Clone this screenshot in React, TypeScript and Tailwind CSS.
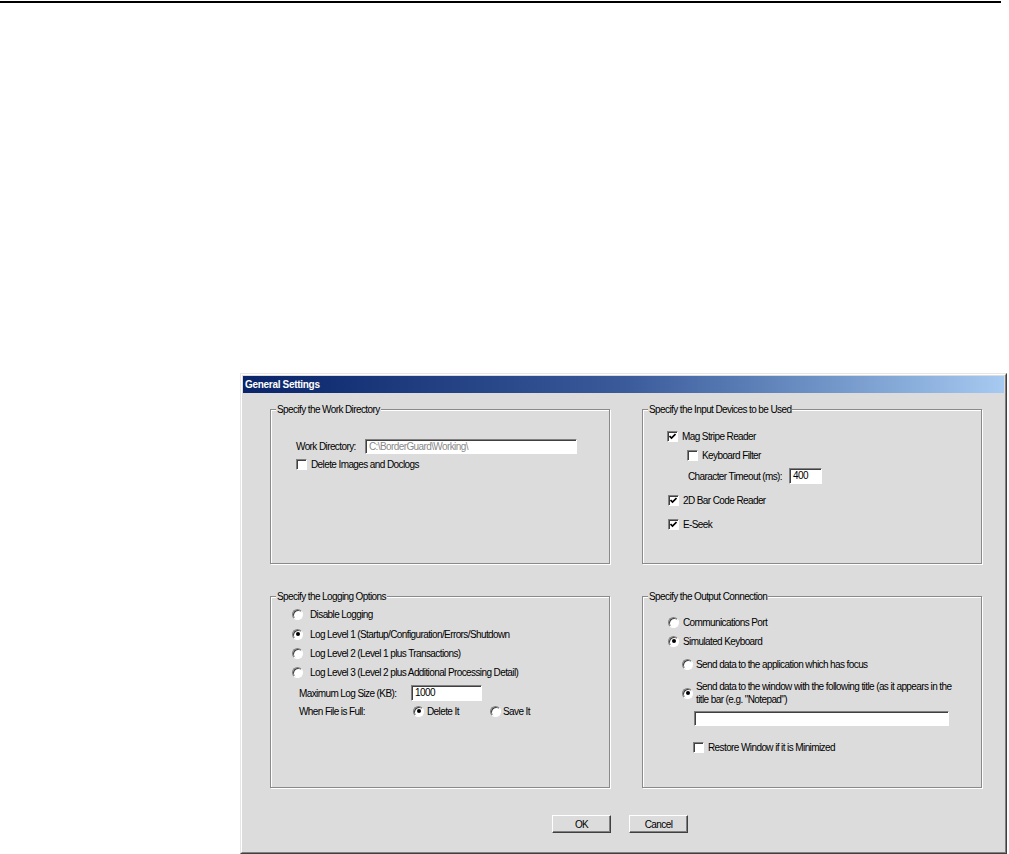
import type { ReactNode } from 'react'

function Check({ checked = false }: { checked?: boolean }) {
  return (
    <span className="w-[11px] h-[11px] shrink-0 bg-white border border-[#808080] border-r-white border-b-white shadow-[inset_1px_1px_0_#404040] flex items-center justify-center">
      {checked && (
        <svg width="7" height="7" viewBox="0 0 7 7">
          <polyline points="0.5,3 2.5,5 6.5,1" fill="none" stroke="#000" strokeWidth="1.7" />
        </svg>
      )}
    </span>
  )
}

function Radio({ checked = false }: { checked?: boolean }) {
  return (
    <span className="w-[11px] h-[11px] shrink-0 rounded-full bg-white border border-[#808080] border-r-white border-b-white shadow-[inset_1px_1px_0_#404040] flex items-center justify-center">
      {checked && <span className="w-[4px] h-[4px] rounded-full bg-black" />}
    </span>
  )
}

function Field({ text, className, gray = false }: { text?: string; className: string; gray?: boolean }) {
  return (
    <div
      className={`${className} bg-white border border-[#808080] border-r-white border-b-white shadow-[inset_1px_1px_0_#404040] pl-[3px] leading-[13px] ${gray ? 'text-[#8a8a8a]' : 'text-black'}`}
    >
      {text}
    </div>
  )
}

function GroupBox({ title, children }: { title: string; children: ReactNode }) {
  return (
    <div className="relative border border-[#8a8a8a] shadow-[inset_1px_1px_0_#fff,1px_1px_0_#fff] flex flex-col">
      <span className="absolute -top-[7px] left-[5px] px-[1px] bg-[#dcdcdc] leading-[13px]">{title}</span>
      {children}
    </div>
  )
}

export default function App() {
  return (
    <div className="w-[1009px] h-[854px] bg-white overflow-hidden font-['Liberation_Sans',Arial,sans-serif] text-[10px] tracking-[-0.6px] text-black leading-[13px]">
      <div className="mt-[1px] h-[2px] w-[1001px] bg-black" />

      {/* dialog */}
      <div className="ml-[240px] mt-[370px] w-[767px] h-[481px] bg-[#dcdcdc] border border-[#e6e6e6] border-r-[#404040] border-b-[#404040]">
        <div className="h-full border border-white border-r-[#808080] border-b-[#808080] p-[1px] flex flex-col">
          <div className="h-[17px] shrink-0 bg-gradient-to-r from-[#0a246a] via-[#3a5a9a] to-[#a6caf0] text-white font-bold tracking-[-0.3px] pl-[2px] flex items-center">
            General Settings
          </div>

          <div className="pl-[27px] pt-[16px] flex flex-col">
            <div className="grid grid-cols-[340px_340px] grid-rows-[155px_192px] gap-[32px]">
              <GroupBox title="Specify the Work Directory">
                <div className="flex items-center h-[15px] mt-[29px] ml-[25px]">
                  <span className="w-[69px]">Work Directory:</span>
                  <Field className="w-[212px] h-[15px]" text={'C:\\BorderGuard\\Working\\'} gray />
                </div>
                <div className="flex items-center h-[14px] mt-[3px] ml-[25px] gap-[4px]">
                  <Check />
                  <span>Delete Images and Doclogs</span>
                </div>
              </GroupBox>

              <GroupBox title="Specify the Input Devices to be Used">
                <div className="flex items-center h-[14px] mt-[19px] ml-[24px] gap-[4px]">
                  <Check checked />
                  <span>Mag Stripe Reader</span>
                </div>
                <div className="flex items-center h-[14px] mt-[5px] ml-[44px] gap-[4px]">
                  <Check />
                  <span>Keyboard Filter</span>
                </div>
                <div className="flex items-center h-[16px] mt-[6px] ml-[45px]">
                  <span className="w-[101px]">Character Timeout (ms):</span>
                  <Field className="w-[33px] h-[16px]" text="400" />
                </div>
                <div className="flex items-center h-[14px] mt-[9px] ml-[25px] gap-[4px]">
                  <Check checked />
                  <span>2D Bar Code Reader</span>
                </div>
                <div className="flex items-center h-[14px] mt-[10px] ml-[25px] gap-[4px]">
                  <Check checked />
                  <span>E-Seek</span>
                </div>
              </GroupBox>

              <GroupBox title="Specify the Logging Options">
                <div className="flex items-center h-[14px] mt-[10px] ml-[21px] gap-[7px]">
                  <Radio />
                  <span>Disable Logging</span>
                </div>
                <div className="flex items-center h-[14px] mt-[6px] ml-[21px] gap-[7px]">
                  <Radio checked />
                  <span>Log Level 1 (Startup/Configuration/Errors/Shutdown</span>
                </div>
                <div className="flex items-center h-[14px] mt-[5px] ml-[21px] gap-[7px]">
                  <Radio />
                  <span>Log Level 2 (Level 1 plus Transactions)</span>
                </div>
                <div className="flex items-center h-[14px] mt-[5px] ml-[21px] gap-[7px]">
                  <Radio />
                  <span>Log Level 3 (Level 2 plus Additional Processing Detail)</span>
                </div>
                <div className="flex items-center h-[16px] mt-[6px] ml-[28px]">
                  <span className="w-[112px]">Maximum Log Size (KB):</span>
                  <Field className="w-[71px] h-[16px]" text="1000" />
                </div>
                <div className="flex items-center h-[14px] mt-[3px] ml-[28px]">
                  <span className="w-[114px]">When File is Full:</span>
                  <div className="w-[77px] flex items-center gap-[3px]">
                    <Radio checked />
                    <span>Delete It</span>
                  </div>
                  <div className="flex items-center gap-[2px]">
                    <Radio />
                    <span>Save It</span>
                  </div>
                </div>
              </GroupBox>

              <GroupBox title="Specify the Output Connection">
                <div className="flex items-center h-[14px] mt-[18px] ml-[25px] gap-[4px]">
                  <Radio />
                  <span>Communications Port</span>
                </div>
                <div className="flex items-center h-[14px] mt-[5px] ml-[25px] gap-[4px]">
                  <Radio checked />
                  <span>Simulated Keyboard</span>
                </div>
                <div className="flex items-center h-[14px] mt-[9px] ml-[39px] gap-[3px]">
                  <Radio />
                  <span>Send data to the application which has focus</span>
                </div>
                <div className="flex items-center h-[26px] mt-[9px] ml-[39px] gap-[3px]">
                  <Radio checked />
                  <span>
                    Send data to the window with the following title (as it appears in the
                    <br />
                    title bar (e.g. "Notepad")
                  </span>
                </div>
                <Field className="w-[255px] h-[15px] mt-[5px] ml-[51px]" />
                <div className="flex items-center h-[14px] mt-[14px] ml-[50px] gap-[4px]">
                  <Check />
                  <span>Restore Window if it is Minimized</span>
                </div>
              </GroupBox>
            </div>

            <div className="flex mt-[27px] ml-[282px] gap-[18px]">
              <button className="w-[59px] h-[18px] bg-[#dcdcdc] border border-white border-r-[#404040] border-b-[#404040] shadow-[inset_-1px_-1px_0_#808080] leading-[13px]">
                OK
              </button>
              <button className="w-[59px] h-[18px] bg-[#dcdcdc] border border-white border-r-[#404040] border-b-[#404040] shadow-[inset_-1px_-1px_0_#808080] leading-[13px]">
                Cancel
              </button>
            </div>
          </div>
        </div>
      </div>
    </div>
  )
}
